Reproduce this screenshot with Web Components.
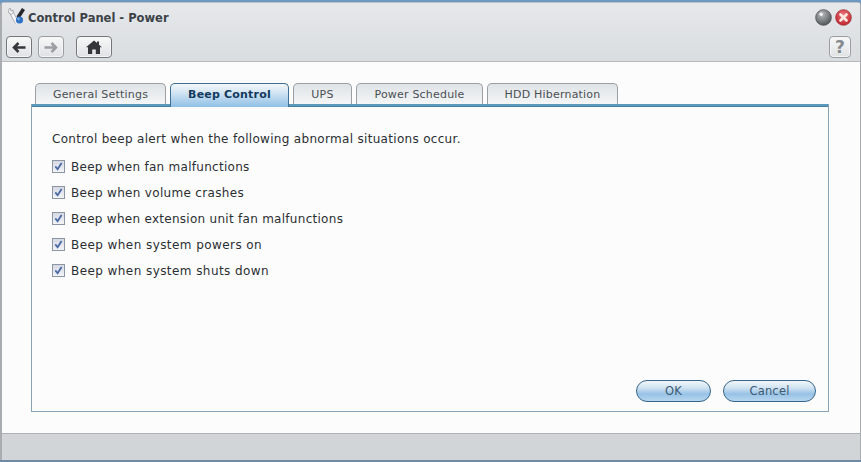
<!DOCTYPE html>
<html>
<head>
<meta charset="utf-8">
<title>Control Panel - Power</title>
<style>
  html, body { margin: 0; padding: 0; height: 100%; background: #7f9db8; overflow: hidden; }
  body { font-family: "DejaVu Sans", sans-serif; font-size: 12px; }
</style>
</head>
<body>
<template id="window-tpl">
  <style>
    :host { display: flex; flex-direction: column; width: 861px; height: 462px; box-sizing: border-box; padding-top: 2px; padding-bottom: 2px; background: linear-gradient(#6d98c2, #6d98c2 2px, #6f8aa5); }
    .frame { flex: 1; display: flex; flex-direction: column; border-left: 2px solid #a9adb1; border-right: 1px solid #a9adb1; border-top: 1px solid #b9c0c6; border-radius: 4px 4px 0 0; min-height: 0; }
    .head { height: 59px; box-sizing: border-box; background: linear-gradient(#e6e8ea, #d9dde0); border-bottom: 1px solid #b6babd; display: flex; flex-direction: column; }
    .body { flex: 1; background: #fcfcfc; padding: 21px 31px 0 29px; min-height: 0; }
    .foot { height: 26px; background: #d1d5d8; border-top: 1px solid #aeb2b5; }
  </style>
  <div class="frame">
    <div class="head"><slot name="head"></slot></div>
    <div class="body"><slot></slot></div>
    <div class="foot"></div>
  </div>
</template>

<template id="titlebar-tpl">
  <style>
    :host { display: flex; align-items: center; height: 26px; padding: 0 8px 0 6px; margin-top: 1px; margin-bottom: 1px; }
    svg { display: block; flex: none; }
    .t { font: bold 11.5px "DejaVu Sans", sans-serif; color: #3c4248; flex: 1; padding-top: 2px; }
    .btns { display: flex; gap: 3px; }
  </style>
  <svg width="20" height="22" viewBox="0 0 20 22">
    <path d="M2.5 5 L9 17" stroke="#f4f5f6" stroke-width="3.4"/>
    <path d="M.8 5.4 L7.4 17.6 M4.2 4.4 L10.6 16.2" stroke="#9a9da1" stroke-width=".7"/>
    <path d="M1 7 a3.6 3.6 0 0 1 1-5 l1 3 2-1 a3.6 3.6 0 0 1-2 4.6z" fill="#f4f5f6" stroke="#8b8e92" stroke-width=".7"/>
    <path d="M15.5 3 L10 11.5" stroke="#24282c" stroke-width="3.6"/>
    <circle cx="11.5" cy="14" r="3.6" fill="#2f72c4"/>
    <circle cx="10.5" cy="13" r="1.2" fill="#7fb0e6"/>
  </svg>
  <div class="t"><slot></slot></div>
  <div class="btns">
    <svg width="17" height="17" viewBox="0 0 18 18">
      <defs><radialGradient id="g1" cx=".4" cy=".3" r=".8"><stop offset="0" stop-color="#b9bcbf"/><stop offset="1" stop-color="#44484c"/></radialGradient></defs>
      <circle cx="9" cy="9" r="8.3" fill="url(#g1)" stroke="#4c5054" stroke-width=".8"/>
      <circle cx="6.5" cy="5.5" r="1.8" fill="#f2f3f4"/>
    </svg>
    <svg width="17" height="17" viewBox="0 0 18 18">
      <defs><radialGradient id="g2" cx=".5" cy=".35" r=".75"><stop offset="0" stop-color="#f0777f"/><stop offset="1" stop-color="#b8141f"/></radialGradient></defs>
      <circle cx="9" cy="9" r="8.3" fill="url(#g2)" stroke="#9c3a40" stroke-width=".8"/>
      <path d="M5.8 5.8 L12.2 12.2 M12.2 5.8 L5.8 12.2" stroke="#fbe9e0" stroke-width="2.8" stroke-linecap="round"/>
    </svg>
  </div>
</template>

<template id="toolbar-tpl">
  <style>
    :host { display: flex; align-items: center; gap: 6px; padding: 5px 9px 0 4px; }
    ::slotted(.sp) { flex: 1; }
    ::slotted(.home) { margin-left: 6px; }
  </style>
  <slot></slot>
</template>

<template id="toolbtn-tpl">
  <style>
    :host { display: flex; align-items: center; justify-content: center; height: 22px; width: 26px; box-sizing: border-box; border: 1px solid #74787c; border-radius: 4px; background: linear-gradient(#f7f8f8, #dfe2e4); box-shadow: inset 0 0 0 1px #f4f5f6; color: #33373b; }
    :host([wide]) { width: 36px; }
    :host([off]) { border-color: #9a9ea2; color: #9a9ea2; }
    svg { display: block; }
  </style>
  <slot></slot>
</template>

<template id="tabs-tpl">
  <style>
    :host { display: flex; gap: 4px; padding-left: 4px; height: 21px; align-items: flex-end; position: relative; z-index: 1; }
  </style>
  <slot></slot>
</template>

<template id="tab-tpl">
  <style>
    :host { display: flex; align-items: center; justify-content: center; height: 21px; box-sizing: border-box; border: 1px solid #9a9fa3; border-bottom: 0; border-radius: 5px 5px 0 0; background: linear-gradient(#dfe3e6, #f4f6f7); color: #4a4f54; font-size: 11px; letter-spacing: .2px; }
    :host([active]) { height: 24px; margin-bottom: -3px; padding-bottom: 3px; border-color: #3f6f93; background: linear-gradient(#f3f7fa 0, #d6e6f3 35%, #8fc0e6 100%); color: #123a5e; font-weight: bold; }
  </style>
  <slot></slot>
</template>

<template id="panel-tpl">
  <style>
    :host { display: flex; flex-direction: column; height: 308px; box-sizing: border-box; border: 1px solid #86a4b6; border-top: 0; }
    .rule { height: 3px; background: linear-gradient(#5a9abd, #5a9abd 2px, #3a6a86); flex: none; }
    .main { flex: 1; padding: 25px 20px 0; display: flex; flex-direction: column; }
    .acts { display: flex; justify-content: flex-end; gap: 12px; padding: 0 12px 9px 0; }
    ::slotted(p) { margin: 0 0 7px; color: #2b2f33; font-size: 12px; line-height: 15px; letter-spacing: .31px; }
  </style>
  <div class="rule"></div>
  <div class="main"><slot></slot></div>
  <div class="acts"><slot name="actions"></slot></div>
</template>

<template id="check-tpl">
  <style>
    :host { display: flex; align-items: center; height: 26px; color: #2b2f33; font-size: 12px; letter-spacing: .28px; }
    .box { width: 13px; height: 13px; box-sizing: border-box; border: 1px solid #8c96a3; background: linear-gradient(#d5d9e3, #f3f4f7); margin-right: 6px; flex: none; display: flex; position: relative; top: -1px; }
    svg { display: block; }
  </style>
  <span class="box"><svg width="11" height="11" viewBox="0 0 11 11"><path d="M2.3 5.4 L4.6 8.2 L8.6 2" fill="none" stroke="#4a6aa6" stroke-width="1.8"/></svg></span>
  <slot></slot>
</template>

<template id="pill-tpl">
  <style>
    :host { display: flex; align-items: center; justify-content: center; height: 22px; box-sizing: border-box; border: 1px solid #35658a; border-radius: 11px; background: linear-gradient(#f2f7fb 0, #cfe2f1 35%, #97c2e6 65%, #b8d6ee 100%); color: #3e5a72; font-size: 11.5px; letter-spacing: .2px; }
  </style>
  <slot></slot>
</template>

<dsm-window>
  <dsm-titlebar slot="head">Control Panel - Power</dsm-titlebar>
  <dsm-toolbar slot="head">
    <tool-btn><svg width="14" height="11" viewBox="0 0 14 11"><path d="M6.5 1 L2 5.5 L6.5 10 M2.5 5.5 H13.5" fill="none" stroke="currentColor" stroke-width="2.5"/></svg></tool-btn>
    <tool-btn off><svg width="14" height="11" viewBox="0 0 14 11"><path d="M7.5 1 L12 5.5 L7.5 10 M11.5 5.5 H.5" fill="none" stroke="currentColor" stroke-width="2.5"/></svg></tool-btn>
    <tool-btn wide class="home"><svg width="16" height="14" viewBox="0 0 16 14"><path d="M8 .5 L11 3 V1.5 H13 V4.7 L16 7.3 H14 V14 H9.8 V9.5 H6.2 V14 H2 V7.3 H0 Z" fill="currentColor"/></svg></tool-btn>
    <span class="sp"></span>
    <tool-btn off style="width:22px;font:bold 17px 'DejaVu Sans',sans-serif;color:#85898d">?</tool-btn>
  </dsm-toolbar>

  <dsm-tabs>
    <dsm-tab style="width:131px">General Settings</dsm-tab>
    <dsm-tab active style="width:119px">Beep Control</dsm-tab>
    <dsm-tab style="width:59px">UPS</dsm-tab>
    <dsm-tab style="width:127px">Power Schedule</dsm-tab>
    <dsm-tab style="width:131px">HDD Hibernation</dsm-tab>
  </dsm-tabs>
  <dsm-panel>
    <p>Control beep alert when the following abnormal situations occur.</p>
    <beep-check>Beep when fan malfunctions</beep-check>
    <beep-check style="letter-spacing:.32px">Beep when volume crashes</beep-check>
    <beep-check>Beep when extension unit fan malfunctions</beep-check>
    <beep-check style="letter-spacing:.43px">Beep when system powers on</beep-check>
    <beep-check style="letter-spacing:.43px">Beep when system shuts down</beep-check>
    <pill-btn slot="actions" style="width:75px">OK</pill-btn>
    <pill-btn slot="actions" style="width:93px">Cancel</pill-btn>
  </dsm-panel>
</dsm-window>

<script>
  // every element is the same: clone its template into an open shadow root
  function define(name, tplId) {
    customElements.define(name, class extends HTMLElement {
      constructor() {
        super();
        this.attachShadow({ mode: "open" });
        this.shadowRoot.appendChild(document.getElementById(tplId).content.cloneNode(true));
      }
    });
  }
  define("dsm-window", "window-tpl");
  define("dsm-titlebar", "titlebar-tpl");
  define("dsm-toolbar", "toolbar-tpl");
  define("tool-btn", "toolbtn-tpl");
  define("dsm-tabs", "tabs-tpl");
  define("dsm-tab", "tab-tpl");
  define("dsm-panel", "panel-tpl");
  define("beep-check", "check-tpl");
  define("pill-btn", "pill-tpl");
</script>
</body>
</html>
